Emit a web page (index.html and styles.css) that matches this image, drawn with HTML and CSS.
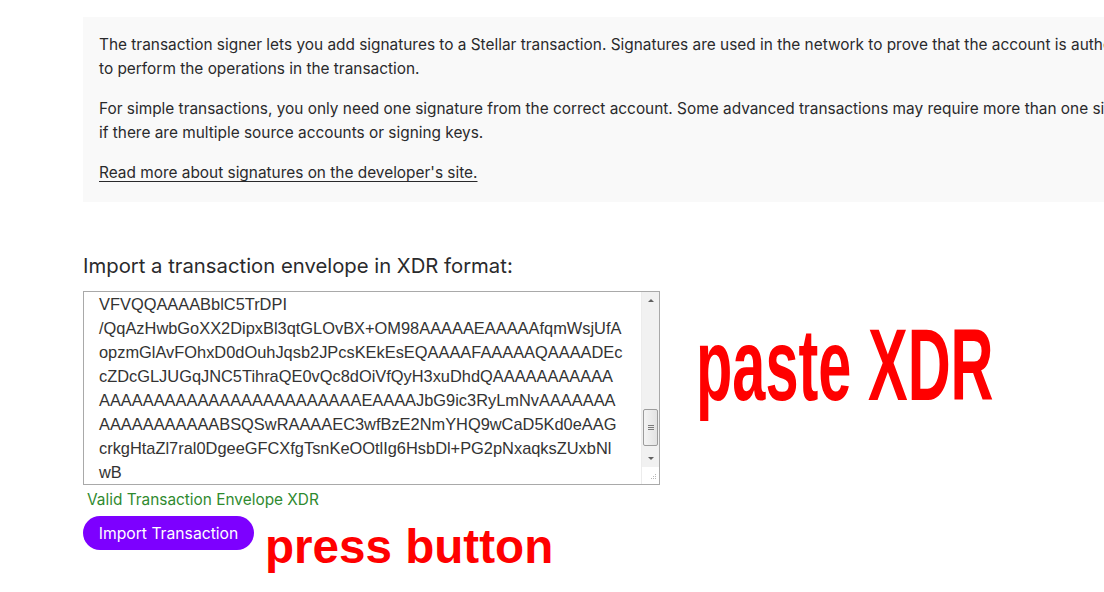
FILE: index.html
```html
<!DOCTYPE html>
<html>
<head>
<meta charset="utf-8">
<link rel="stylesheet" href="styles.css">
</head>
<body>
<main class="page">
  <section class="intro">
    <p>The transaction signer lets you add signatures to a Stellar transaction. Signatures are used in the network to prove that the account is authorized<br>to perform the operations in the transaction.</p>
    <p>For simple transactions, you only need one signature from the correct account. Some advanced transactions may require more than one signature<br>if there are multiple source accounts or signing keys.</p>
    <p><a class="link" href="#">Read more about signatures on the developer's site.</a></p>
  </section>

  <section class="import">
    <h2 class="import-title">Import a transaction envelope in XDR format:</h2>
    <div class="xdr-row">
      <div class="xdr-box">
        <div class="xdr-text">
          <div>VFVQQAAAABblC5TrDPI</div>
          <div>/QqAzHwbGoXX2DipxBl3qtGLOvBX+OM98AAAAAEAAAAAfqmWsjUfA</div>
          <div>opzmGlAvFOhxD0dOuhJqsb2JPcsKEkEsEQAAAAFAAAAAQAAAADEc</div>
          <div>cZDcGLJUGqJNC5TihraQE0vQc8dOiVfQyH3xuDhdQAAAAAAAAAAA</div>
          <div>AAAAAAAAAAAAAAAAAAAAAAAAEAAAAJbG9ic3RyLmNvAAAAAAA</div>
          <div>AAAAAAAAAAABSQSwRAAAAEC3wfBzE2NmYHQ9wCaD5Kd0eAAG</div>
          <div>crkgHtaZl7ral0DgeeGFCXfgTsnKeOOtlIg6HsbDl+PG2pNxaqksZUxbNl</div>
          <div>wB</div>
        </div>
        <div class="scrollbar">
          <div class="sb-btn"><span class="arrow-up"></span></div>
          <div class="sb-track">
            <div class="sb-thumb"><span></span><span></span><span></span></div>
          </div>
          <div class="sb-btn"><span class="arrow-down"></span></div>
          <div class="sb-corner">
            <svg width="8" height="8" viewBox="0 0 8 8"><g fill="#b8b8b8"><rect x="6" y="0" width="1" height="1"/><rect x="4" y="2" width="1" height="1"/><rect x="6" y="2" width="1" height="1"/><rect x="2" y="4" width="1" height="1"/><rect x="4" y="4" width="1" height="1"/><rect x="6" y="4" width="1" height="1"/></g></svg>
          </div>
        </div>
      </div>
      <div class="note note-paste">paste XDR</div>
    </div>
    <div class="valid">Valid Transaction Envelope XDR</div>
    <div class="action-row">
      <button class="btn">Import Transaction</button>
      <div class="note note-press">press button</div>
    </div>
  </section>
</main>
</body>
</html>
```

FILE: styles.css
```css
html, body {
  margin: 0;
  padding: 0;
  overflow: hidden;
  background: #ffffff;
}
body {
  font-family: Inter, "Liberation Sans", sans-serif;
  color: #2a2a2c;
  width: 1104px;
  height: 592px;
}
.page {
  padding: 17px 0 0 83px;
}
.intro {
  background: #f9f9f9;
  width: 1200px;
  padding: 16px 16px 17px 16px;
  box-sizing: border-box;
}
.intro p {
  margin: 0 0 16px 0;
  font-size: 15.4px;
  line-height: 24px;
  white-space: nowrap;
}
.intro p:last-child {
  margin-bottom: 0;
}
.link {
  color: #2a2a2c;
  text-decoration: underline;
  text-underline-offset: 3px;
}
.import {
  padding-top: 51px;
}
.import-title {
  margin: 0 0 13px 0;
  font-size: 20.3px;
  line-height: 25px;
  font-weight: 400;
}
.xdr-row {
  display: flex;
  align-items: flex-start;
  position: relative;
}
.xdr-box {
  width: 577px;
  height: 194px;
  box-sizing: border-box;
  border: 1px solid #a9a9a9;
  display: flex;
  background: #fff;
}
.xdr-text {
  flex: 1;
  padding: 0 0 0 15px;
  font-family: "Liberation Sans", Arial, sans-serif;
  font-size: 16.4px;
  line-height: 24px;
  color: #333;
  white-space: nowrap;
  overflow: hidden;
}
.scrollbar {
  width: 17px;
  background: #f1f1f1;
  display: flex;
  flex-direction: column;
  border-left: 1px solid #ececec;
}
.sb-btn {
  height: 17px;
  display: flex;
  align-items: center;
  justify-content: center;
}
.arrow-up {
  width: 0; height: 0;
  border-left: 3px solid transparent;
  border-right: 3px solid transparent;
  border-bottom: 3px solid #606060;
}
.arrow-down {
  width: 0; height: 0;
  border-left: 3px solid transparent;
  border-right: 3px solid transparent;
  border-top: 3px solid #606060;
}
.sb-track {
  flex: 1;
  padding-top: 100px;
}
.sb-thumb {
  height: 37px;
  margin: 0 1px;
  box-sizing: border-box;
  background: linear-gradient(to right, #f4f4f4, #e2e2e2);
  border: 1px solid #9c9c9c;
  border-radius: 2px;
  display: flex;
  flex-direction: column;
  align-items: center;
  justify-content: center;
  gap: 1px;
}
.sb-thumb span {
  width: 6px;
  height: 1px;
  background: #7a7a7a;
}
.sb-corner {
  height: 17px;
  background: #fff;
  display: flex;
  align-items: flex-end;
  justify-content: flex-end;
  padding: 0 2px 2px 0;
  box-sizing: border-box;
}
.note {
  color: #ff0000;
  font-family: "Liberation Sans", Arial, sans-serif;
  font-weight: 700;
}
.note-paste {
  position: absolute;
  left: 613px;
  top: 24px;
  font-size: 59.5px;
  line-height: 1;
  transform: scaleY(1.7);
  transform-origin: left top;
}
.valid {
  margin: 5px 0 0 4px;
  font-size: 15.4px;
  line-height: 20px;
  color: #2f8a2f;
}
.action-row {
  display: flex;
  align-items: flex-start;
  margin-top: 6px;
}
.btn {
  height: 34px;
  width: 171px;
  border: none;
  border-radius: 17px;
  background: #7d00ff;
  color: #fff;
  font-family: Inter, "Liberation Sans", sans-serif;
  font-size: 15.7px;
  padding: 0;
  cursor: pointer;
}
.note-press {
  margin: 4px 0 0 11px;
  font-size: 47.6px;
  line-height: 54px;
}
```
